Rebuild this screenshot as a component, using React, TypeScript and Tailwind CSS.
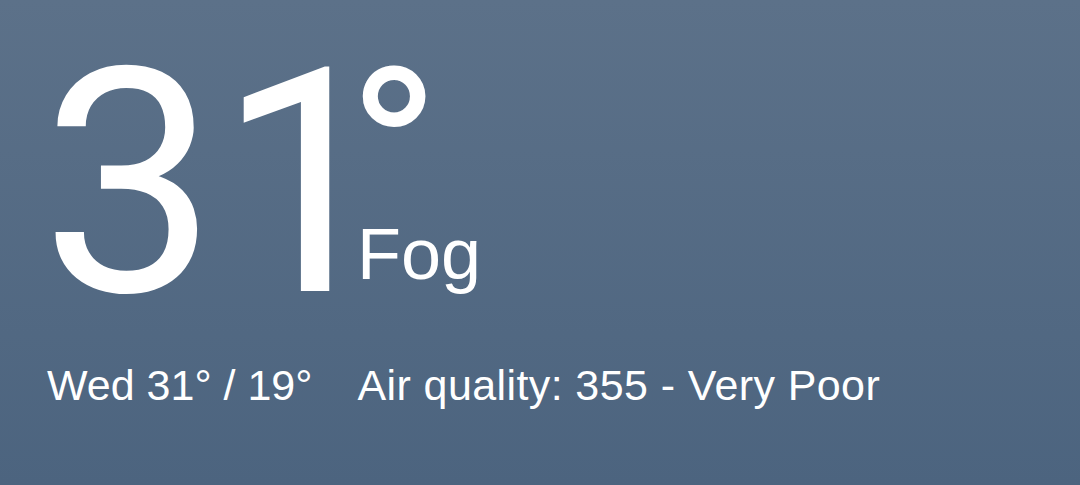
export default function App() {
  return (
    <div
      className="h-[485px] w-full overflow-hidden bg-linear-to-b from-[#5c7189] to-[#4c647f] pl-[47px] pt-[27px] text-white"
      style={{ fontFamily: '"Liberation Sans", Arial, sans-serif' }}
    >
      {/* current temperature with unit and condition */}
      <div className="flex items-start">
        <span
          className="-ml-[6px] block text-[314px] leading-none"
          style={{ fontFamily: 'Roboto, "Liberation Sans", sans-serif' }}
        >
          3<span className="tracking-[-40px]">1</span>
        </span>
        <div className="flex flex-col">
          <span className="mt-[9px] block h-[182px] text-[200px] font-bold leading-none">°</span>
          <span className="ml-[3px] block text-[72px] leading-none">Fog</span>
        </div>
      </div>

      {/* daily range and air quality */}
      <div className="mt-[23px] flex gap-[45px] text-[43px] leading-none">
        <span>Wed 31° / 19°</span>
        <span className="tracking-[0.4px]">Air quality: 355 - Very Poor</span>
      </div>
    </div>
  );
}
